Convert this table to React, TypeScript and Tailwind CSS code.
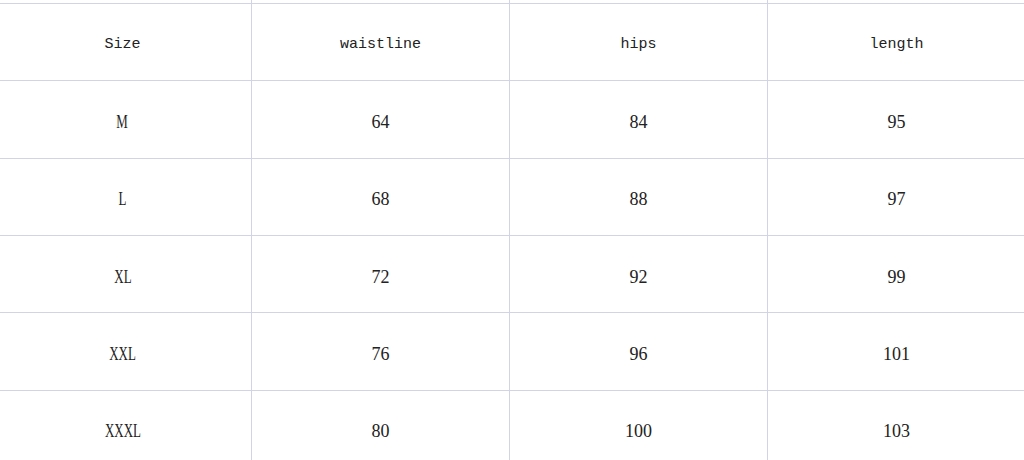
import React from 'react'

const header = ['Size', 'waistline', 'hips', 'length']

const rows = [
    ['M', '64', '84', '95'],
    ['L', '68', '88', '97'],
    ['XL', '72', '92', '99'],
    ['XXL', '76', '96', '101'],
    ['XXXL', '80', '100', '103'],
]

export default function App() {
    return (
        <div className="w-[1024px] h-[460px] overflow-hidden bg-white">
            <div className="w-[1032px] ml-[-6px] grid grid-cols-[258px_258px_258px_258px]">
                {[0, 1, 2, 3].map(i => (
                    <div key={'top' + i} className="h-[3px] border-r border-[#cfd5e4]"></div>
                ))}
                {header.map(h => (
                    <div key={h} className="h-[77.33px] pt-[7px] border-t border-r border-[#cfd5e4] flex items-center justify-center text-[15px] text-[#222] font-['Liberation_Mono',monospace]">
                        {h}
                    </div>
                ))}
                {rows.map(row => row.map((cell, j) => (
                    <div key={row[0] + j} className="h-[77.33px] pt-[6px] border-t border-r border-[#cfd5e4] flex items-center justify-center text-[18px] text-[#222] font-['Liberation_Serif',serif]">
                        <span className={j === 0 ? 'inline-block scale-x-[0.72]' : ''}>{cell}</span>
                    </div>
                )))}
            </div>
        </div>
    )
}
